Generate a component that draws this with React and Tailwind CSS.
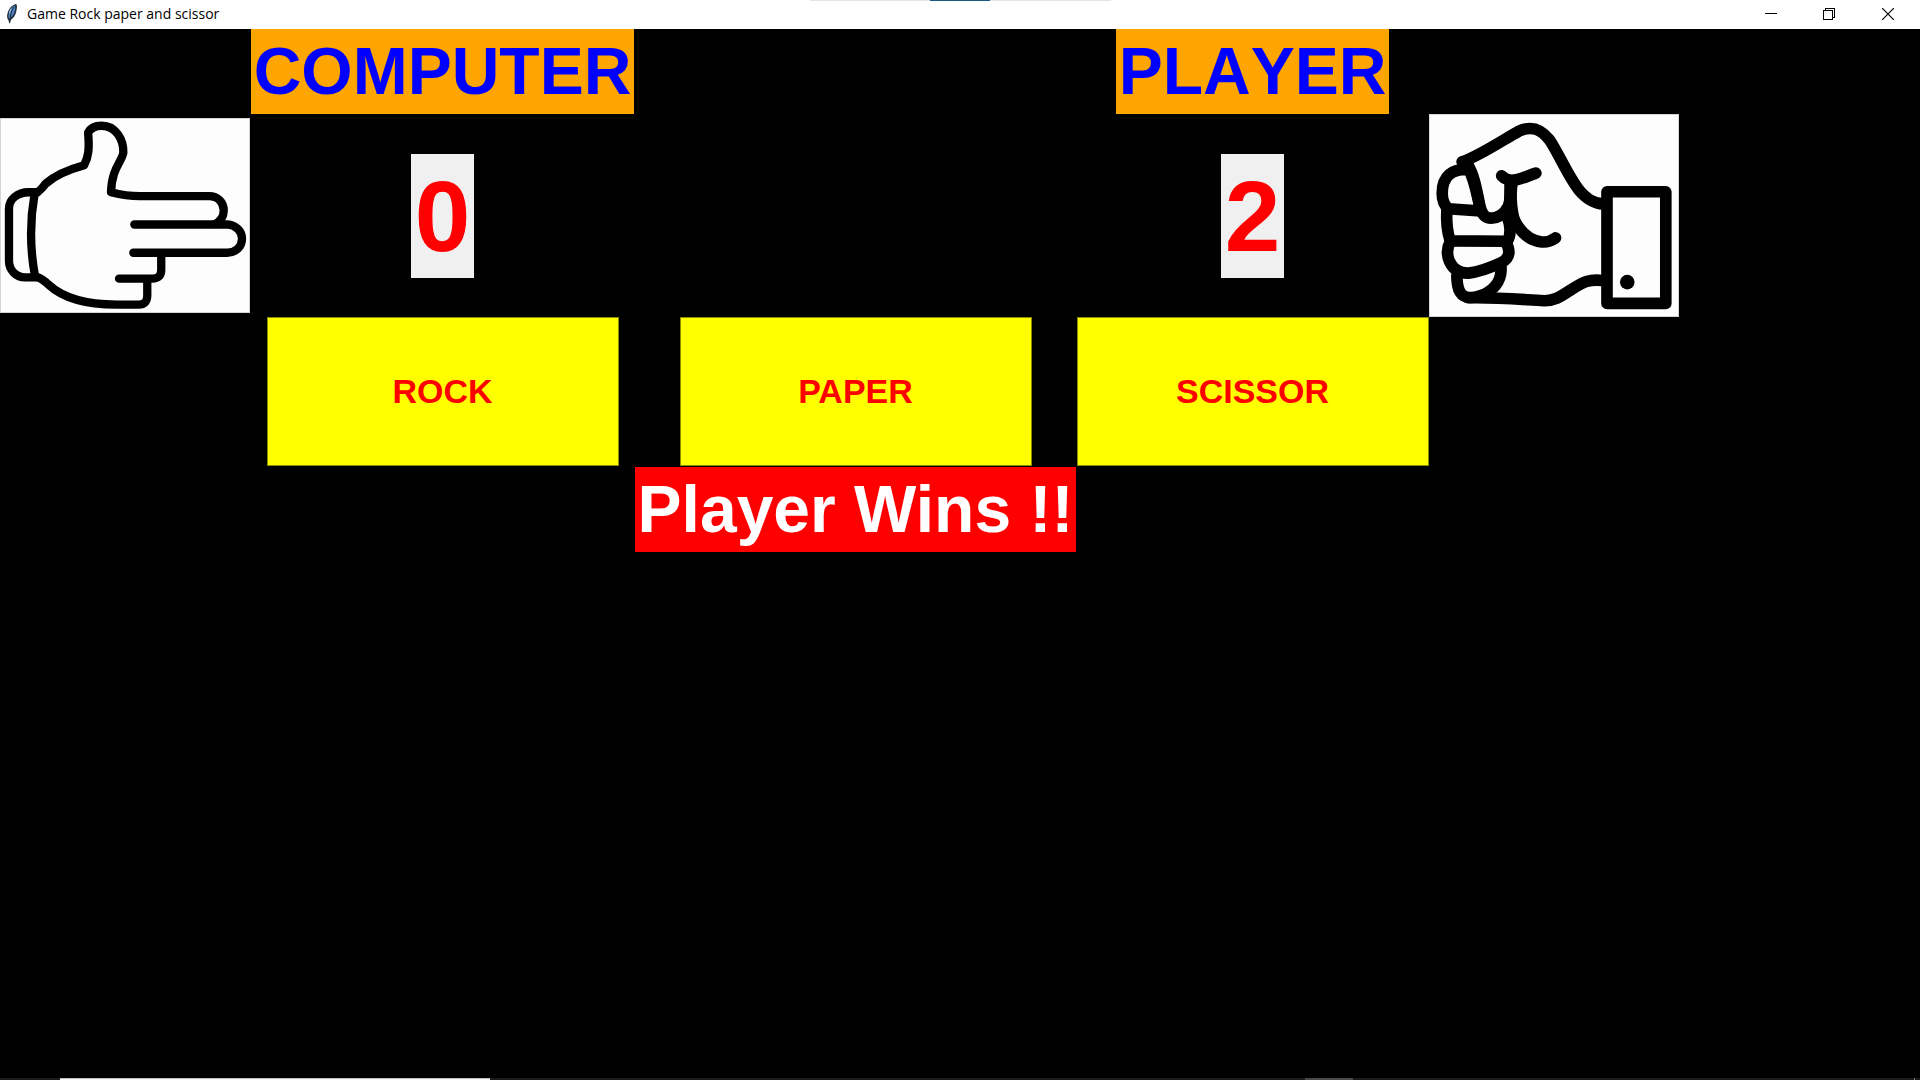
import React from "react";

function FeatherIcon() {
  return (
    <svg className="h-5 w-3 shrink-0" viewBox="0 0 36 60" aria-hidden="true">
      <path d="M31 0C20 2 9 12 5 26C2 35 3 43 7 48L11 59L14 48C22 44 29 34 31 22C33 12 34 6 31 0Z" fill="#22303f" />
      <path d="M27 4C18 8 10 18 8 30C7 37 8 42 10 44C18 40 25 30 27 18C28 12 28 8 27 4Z" fill="#4f86c6" />
      <path d="M25 8C17 17 13 32 11 57" fill="none" stroke="#16202b" strokeWidth="3" />
      <path d="M15 14L10 27" stroke="#b9cbe0" strokeWidth="3" />
    </svg>
  );
}

function TitleBar() {
  return (
    <header className="relative flex h-[29px] items-center gap-[9px] bg-white pr-0.5 pb-px pl-1.5 text-black">
      <div className="absolute inset-x-0 top-0 flex justify-center" aria-hidden="true">
        <div className="flex h-px w-[301px] justify-center bg-[#e5e5e5]">
          <div className="h-px w-[60px] bg-[#1c5a85]" />
        </div>
      </div>
      <FeatherIcon />
      <h1 className="grow font-['Open_Sans','Noto_Sans',sans-serif] text-[14px] leading-5">
        Game Rock paper and scissor
      </h1>
      <div className="flex h-full">
        <button type="button" aria-label="Minimize" className="flex w-[58px] items-center justify-center">
          <svg width="12" height="12" viewBox="0 0 12 12" shapeRendering="crispEdges">
            <path d="M0 5.5H12" stroke="#000" />
          </svg>
        </button>
        <button type="button" aria-label="Restore" className="flex w-[58px] items-center justify-center">
          <svg width="12" height="12" viewBox="0 0 12 12" fill="none" stroke="#000" shapeRendering="crispEdges">
            <path d="M.5 2.5H9.5V11.5H.5Z" />
            <path d="M2.5 2.5V.5H11.5V9.5H9.5" />
          </svg>
        </button>
        <button type="button" aria-label="Close" className="flex w-[60px] items-center justify-center">
          <svg width="12" height="12" viewBox="0 0 12 12">
            <path d="M0 0L12 12M12 0L0 12" stroke="#000" strokeWidth="1.2" />
          </svg>
        </button>
      </div>
    </header>
  );
}

function ScissorHand() {
  return (
    <svg
      role="img"
      aria-label="Scissor"
      className="block aspect-[250/195] w-full border border-[#d4d4d4] bg-[#fdfdfd]"
      viewBox="2 25 746 580"
    >
      <g fill="none" stroke="#000" strokeWidth="25" strokeLinecap="round" strokeLinejoin="round">
        <path d="M107 245C120 243 126 230 138 218C168 192 205 177 252 164C266 138 268 112 264 66C272 50 287 45 305 45C348 45 371 88 370 126C366 153 335 172 333 245C360 252 385 257 420 257H628C654 257 672 275 672 300C672 320 661 333 645 341" />
        <path d="M403 342H682C709 344 727 362 727 385C727 409 708 427 682 427H400" />
        <path d="M484 432V478Q484 505 457 505H357" />
        <path d="M442 510V556Q442 583 416 583H350C255 583 190 565 145 523C132 510 122 503 108 499" />
        <path d="M112 245H85C52 245 26 266 26 294V452C26 480 48 501 75 501H108" />
        <path d="M103 250C88 335 91 425 104 496" />
      </g>
    </svg>
  );
}

function RockHand() {
  return (
    <svg
      role="img"
      aria-label="Rock"
      className="block aspect-[250/203] w-full border border-[#d4d4d4] bg-[#fdfdfd]"
      viewBox="28 30 745 605"
    >
      <g fill="none" stroke="#000" strokeWidth="35" strokeLinecap="round" strokeLinejoin="round">
        <path d="M124 171C180 151 250 103 294 79C335 60 362 73 387 105C419 154 441 211 475 255C499 284 520 296 550 298" />
        <path d="M560 261H737V597H560Z" />
        <path d="M547 528C501 524 489 533 455 554C423 575 404 590 370 589C310 586 240 579 150 580C119 579 109 558 108 514" />
        <path d="M144 194C95 190 64 214 64 266C64 286 69 300 82 312L180 319C170 280 164 230 144 194Z" />
        <path d="M141 180C162 215 168 260 178 306C184 331 196 342 216 340C246 337 266 310 268 285" />
        <path d="M78 314C76 349 80 385 88 409L260 410C273 389 269 362 260 335" />
        <path d="M88 412C78 430 78 452 86 471C95 490 112 507 143 506C173 503 213 488 241 475C272 459 268 435 255 412" />
        <path d="M241 486C244 527 225 550 194 568C175 576 156 580 141 580" />
        <path d="M243 213C252 224 269 229 287 225C308 221 327 211 346 205" />
        <path d="M269 230V315C284 361 313 406 364 412C381 414 392 409 405 400" />
      </g>
      <path d="M252 235H292C285 275 290 330 306 365L286 383L248 340Z" />
      <circle cx="621" cy="533" r="22" />
    </svg>
  );
}

function NameLabel({ children }) {
  return (
    <h2 className="justify-self-center bg-[#ffa500] px-[3px] text-[66px] leading-[85px] font-bold whitespace-nowrap text-[#0000ff] [font-kerning:none]">
      {children}
    </h2>
  );
}

function Score({ label, value }) {
  return (
    <output
      aria-label={label}
      className="self-center justify-self-center bg-[#f0f0f0] px-1 text-[100px] leading-[124px] font-bold text-[#ff0000]"
    >
      {value}
    </output>
  );
}

function ChoiceButton({ children }) {
  return (
    <button
      type="button"
      className="h-[149px] w-[352px] justify-self-center border border-[#8a8a00] bg-[#ffff00] text-[34px] font-bold text-[#ff0000]"
    >
      {children}
    </button>
  );
}

function TaskbarEdge() {
  return (
    <footer className="flex h-0.5 bg-[#1c1a1c]" aria-hidden="true">
      <div className="ml-[60px] h-0.5 w-[430px] border-t border-[#bdbdbd] bg-[#f7f7f7]" />
      <div className="ml-auto h-0.5 w-12 bg-[#4a484a]" />
      <div className="mr-[5px] ml-[561px] h-0.5 w-px bg-[#777777]" />
    </footer>
  );
}

export default function App() {
  return (
    <div className="flex min-h-screen flex-col bg-black font-['Liberation_Sans',Arial,sans-serif]">
      <TitleBar />
      <main className="grid grow grid-cols-[250fr_385fr_441fr_353fr_250fr_241fr] content-start">
        <div className="col-start-2 grid">
          <NameLabel>COMPUTER</NameLabel>
        </div>
        <div className="col-start-4 grid">
          <NameLabel>PLAYER</NameLabel>
        </div>

        <div className="col-start-1 self-center">
          <ScissorHand />
        </div>
        <Score label="Computer score" value="0" />
        <div className="col-start-4 grid">
          <Score label="Player score" value="2" />
        </div>
        <div className="col-start-5">
          <RockHand />
        </div>

        <div className="col-start-2 grid pb-px">
          <ChoiceButton>ROCK</ChoiceButton>
        </div>
        <ChoiceButton>PAPER</ChoiceButton>
        <ChoiceButton>SCISSOR</ChoiceButton>

        <p
          role="status"
          className="col-start-3 bg-[#ff0000] text-center text-[66px] leading-[85px] font-bold whitespace-nowrap text-white"
        >
          Player Wins !!
        </p>
      </main>
      <TaskbarEdge />
    </div>
  );
}
